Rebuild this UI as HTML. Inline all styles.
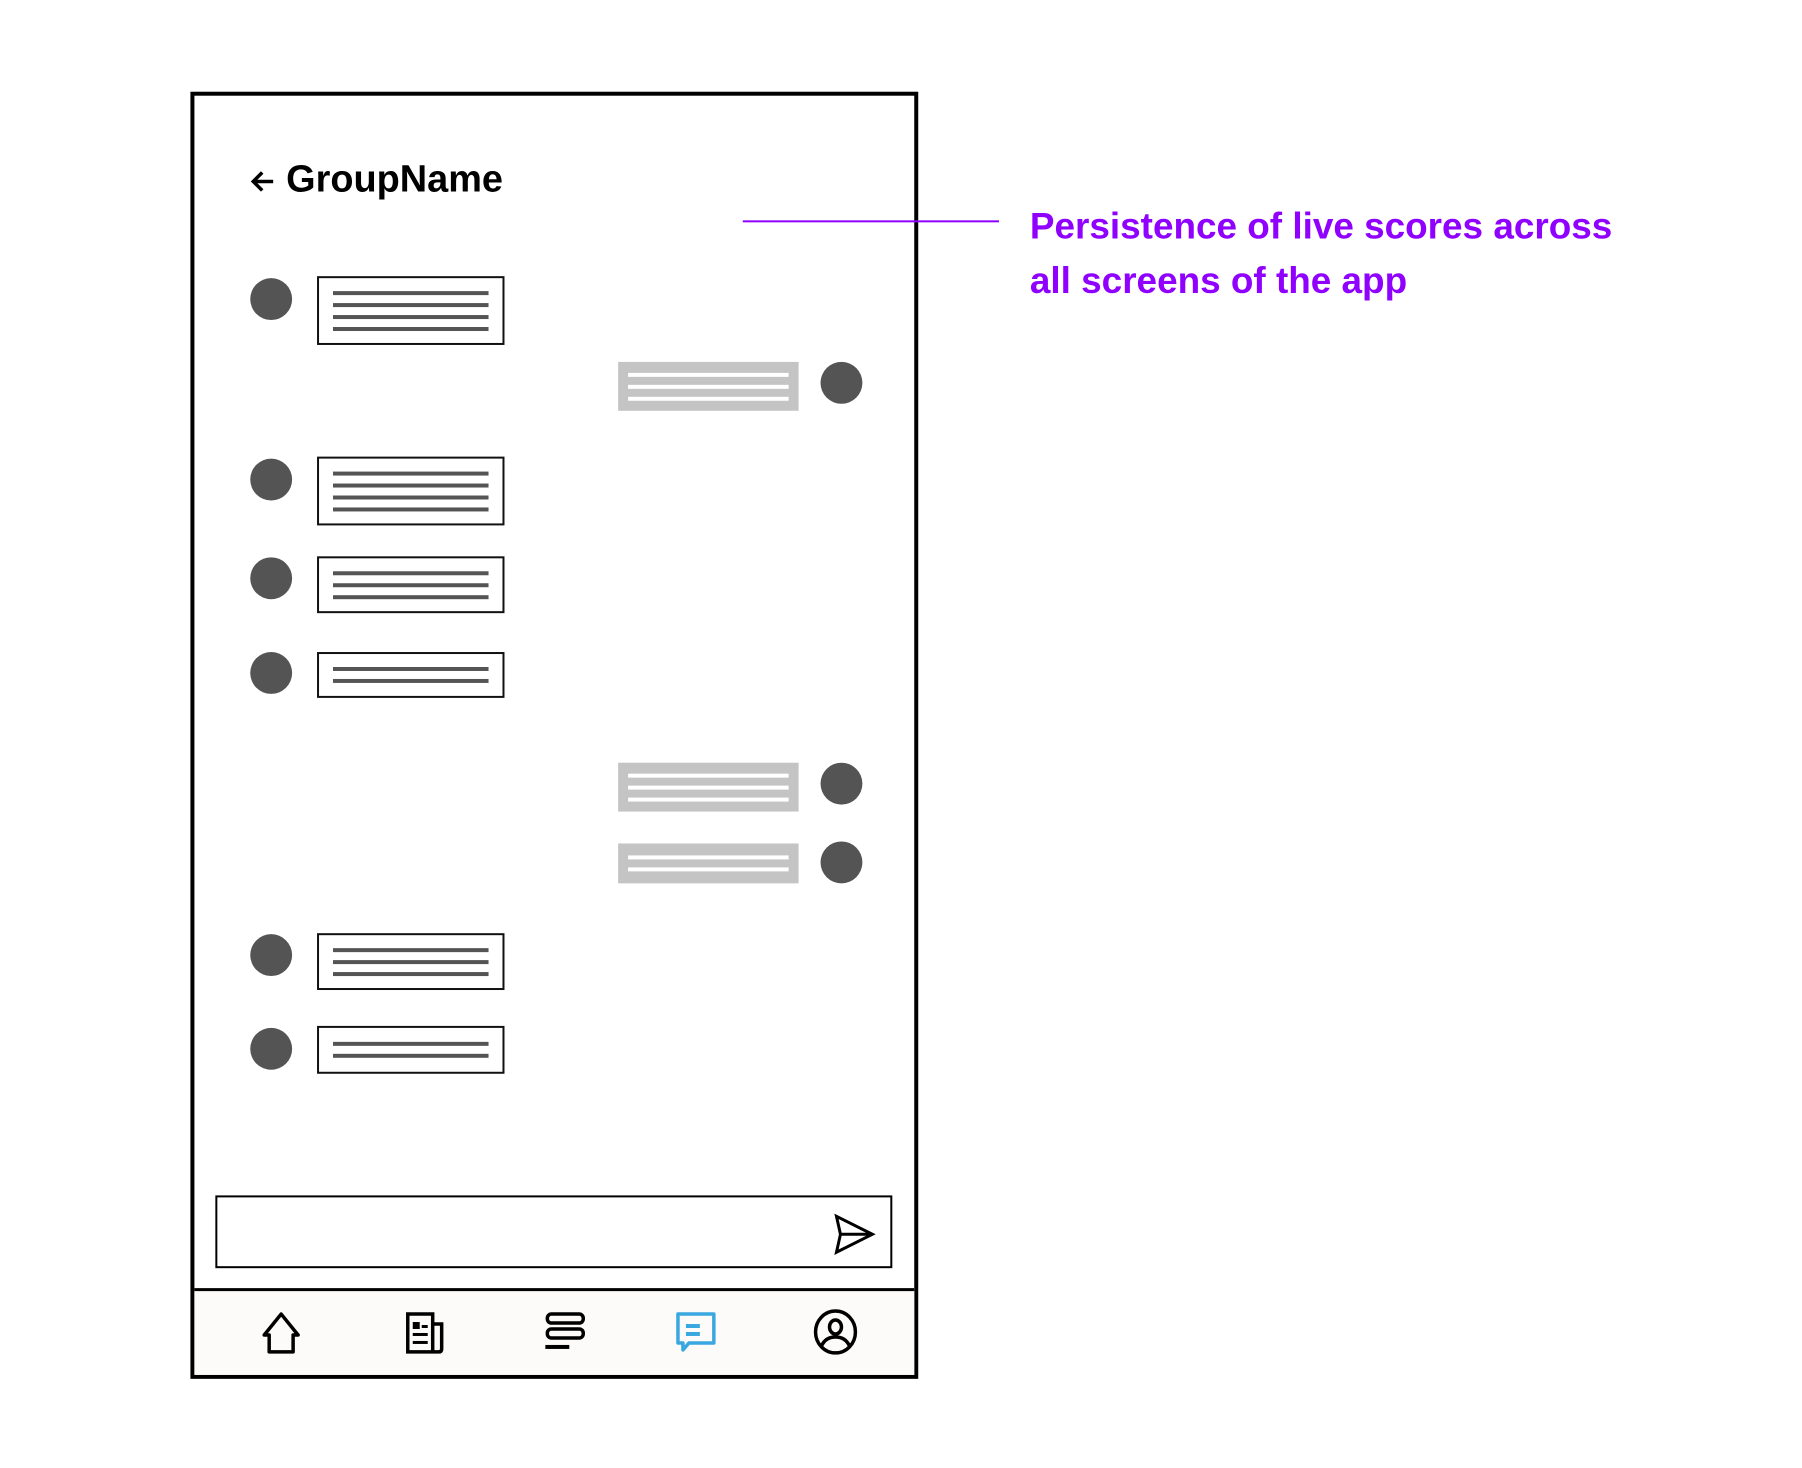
<!DOCTYPE html>
<html><head><style>
*{margin:0;padding:0;box-sizing:border-box}
body{width:1802px;height:1468px;background:#fff;position:relative;overflow:hidden;font-family:"Liberation Sans",sans-serif}
#w{position:absolute;left:0;top:0;width:1802px;height:1468px;transform:translate(-1px,-1px) scale(0.997);transform-origin:0 0}
.a{position:absolute}
.av{position:absolute;width:42px;height:42px;border-radius:50%;background:#545454}
.lb{position:absolute;left:319px;width:188px;border:2px solid #111;background:#fff;display:flex;flex-direction:column;justify-content:center;gap:8px;padding:0 14px}
.lb i{display:block;height:4px;background:#545454}
.rb{position:absolute;left:621px;width:181px;background:#c4c4c4;display:flex;flex-direction:column;justify-content:center;gap:8px;padding:0 10px}
.rb i{display:block;height:4px;background:#fff}
</style></head><body><div id="w">
<div class="a" style="left:192px;top:93px;width:730px;height:1291px;border:4px solid #000"></div>
<div class="a" style="left:196px;top:1293px;width:722px;height:87px;background:#fcfbf9;border-top:3px solid #000"></div>
<svg class="a" style="left:251px;top:171px" width="26" height="24" viewBox="0 0 26 24"><path d="M24 12 L4 12 M13 3 L4 12 L13 21" fill="none" stroke="#000" stroke-width="3.5"/></svg>
<div class="a" style="left:288px;top:160px;font-size:38px;font-weight:bold;color:#000;white-space:nowrap">GroupName</div>
<div class="a" style="left:746px;top:222px;width:257px;height:2px;background:#8f00ff"></div>
<div class="a" style="left:1034px;top:200px;font-size:37px;font-weight:bold;color:#8f00ff;line-height:55px;white-space:nowrap">Persistence of live scores across<br>all screens of the app</div>

<div class="av" style="left:252px;top:280px"></div>
<div class="lb" style="top:278px;height:69px"><i></i><i></i><i></i><i></i></div>
<div class="rb" style="top:364px;height:49px"><i></i><i></i><i></i></div>
<div class="av" style="left:824px;top:364px"></div>
<div class="av" style="left:252px;top:461px"></div>
<div class="lb" style="top:459px;height:69px"><i></i><i></i><i></i><i></i></div>
<div class="av" style="left:252px;top:560px"></div>
<div class="lb" style="top:559px;height:57px"><i></i><i></i><i></i></div>
<div class="av" style="left:252px;top:655px"></div>
<div class="lb" style="top:655px;height:46px"><i></i><i></i></div>
<div class="rb" style="top:766px;height:49px"><i></i><i></i><i></i></div>
<div class="av" style="left:824px;top:766px"></div>
<div class="rb" style="top:847px;height:40px"><i></i><i></i></div>
<div class="av" style="left:824px;top:845px"></div>
<div class="av" style="left:252px;top:938px"></div>
<div class="lb" style="top:937px;height:57px"><i></i><i></i><i></i></div>
<div class="av" style="left:252px;top:1032px"></div>
<div class="lb" style="top:1030px;height:48px"><i></i><i></i></div>

<div class="a" style="left:217px;top:1200px;width:679px;height:73px;border:2px solid #000"></div>
<svg class="a" style="left:836px;top:1218px" width="46" height="42" viewBox="0 0 46 42"><path d="M4 3 L40 21 L4 39 L8 21 Z M8 21 L40 21" fill="none" stroke="#000" stroke-width="3" stroke-linejoin="miter"/></svg>

<svg class="a" style="left:262px;top:1316px" width="42" height="44" viewBox="0 0 42 44"><path d="M21 3 L38 24 L33 24 L33 41 L9 41 L9 24 L4 24 Z" fill="none" stroke="#000" stroke-width="3.5" stroke-linejoin="round"/></svg>
<svg class="a" style="left:406px;top:1316px" width="44" height="44" viewBox="0 0 44 44"><path d="M4 3 L29 3 L29 41 L4 41 Z M29 13 L38 13 L38 38 Q38 41 35 41 L29 41" fill="none" stroke="#000" stroke-width="3.5"/><rect x="9" y="11" width="7" height="7"/><rect x="18" y="14" width="6" height="3"/><rect x="9" y="22" width="15" height="3"/><rect x="9" y="30" width="15" height="3"/></svg>
<svg class="a" style="left:546px;top:1316px" width="44" height="44" viewBox="0 0 44 44"><rect x="4" y="3" width="36" height="9" rx="4" fill="none" stroke="#000" stroke-width="3.5"/><rect x="4" y="18" width="36" height="9" rx="4" fill="none" stroke="#000" stroke-width="3.5"/><rect x="2" y="34" width="24" height="4"/></svg>
<svg class="a" style="left:677px;top:1315px" width="44" height="46" viewBox="0 0 44 46"><path d="M4 4 L40 4 L40 33 L15 33 L9 40 L9 33 L4 33 Z" fill="none" stroke="#3aa8e0" stroke-width="3.5" stroke-linejoin="round"/><rect x="12" y="14" width="14" height="4" fill="#3aa8e0"/><rect x="12" y="22" width="14" height="4" fill="#3aa8e0"/></svg>
<svg class="a" style="left:816px;top:1314px" width="46" height="46" viewBox="0 0 46 46"><ellipse cx="23" cy="23" rx="20" ry="21" fill="none" stroke="#000" stroke-width="3.5"/><ellipse cx="23" cy="18" rx="6" ry="7" fill="none" stroke="#000" stroke-width="3.5"/><path d="M9 37 Q13 28 23 28 Q33 28 37 37" fill="none" stroke="#000" stroke-width="3.5"/></svg>
</div></body></html>
